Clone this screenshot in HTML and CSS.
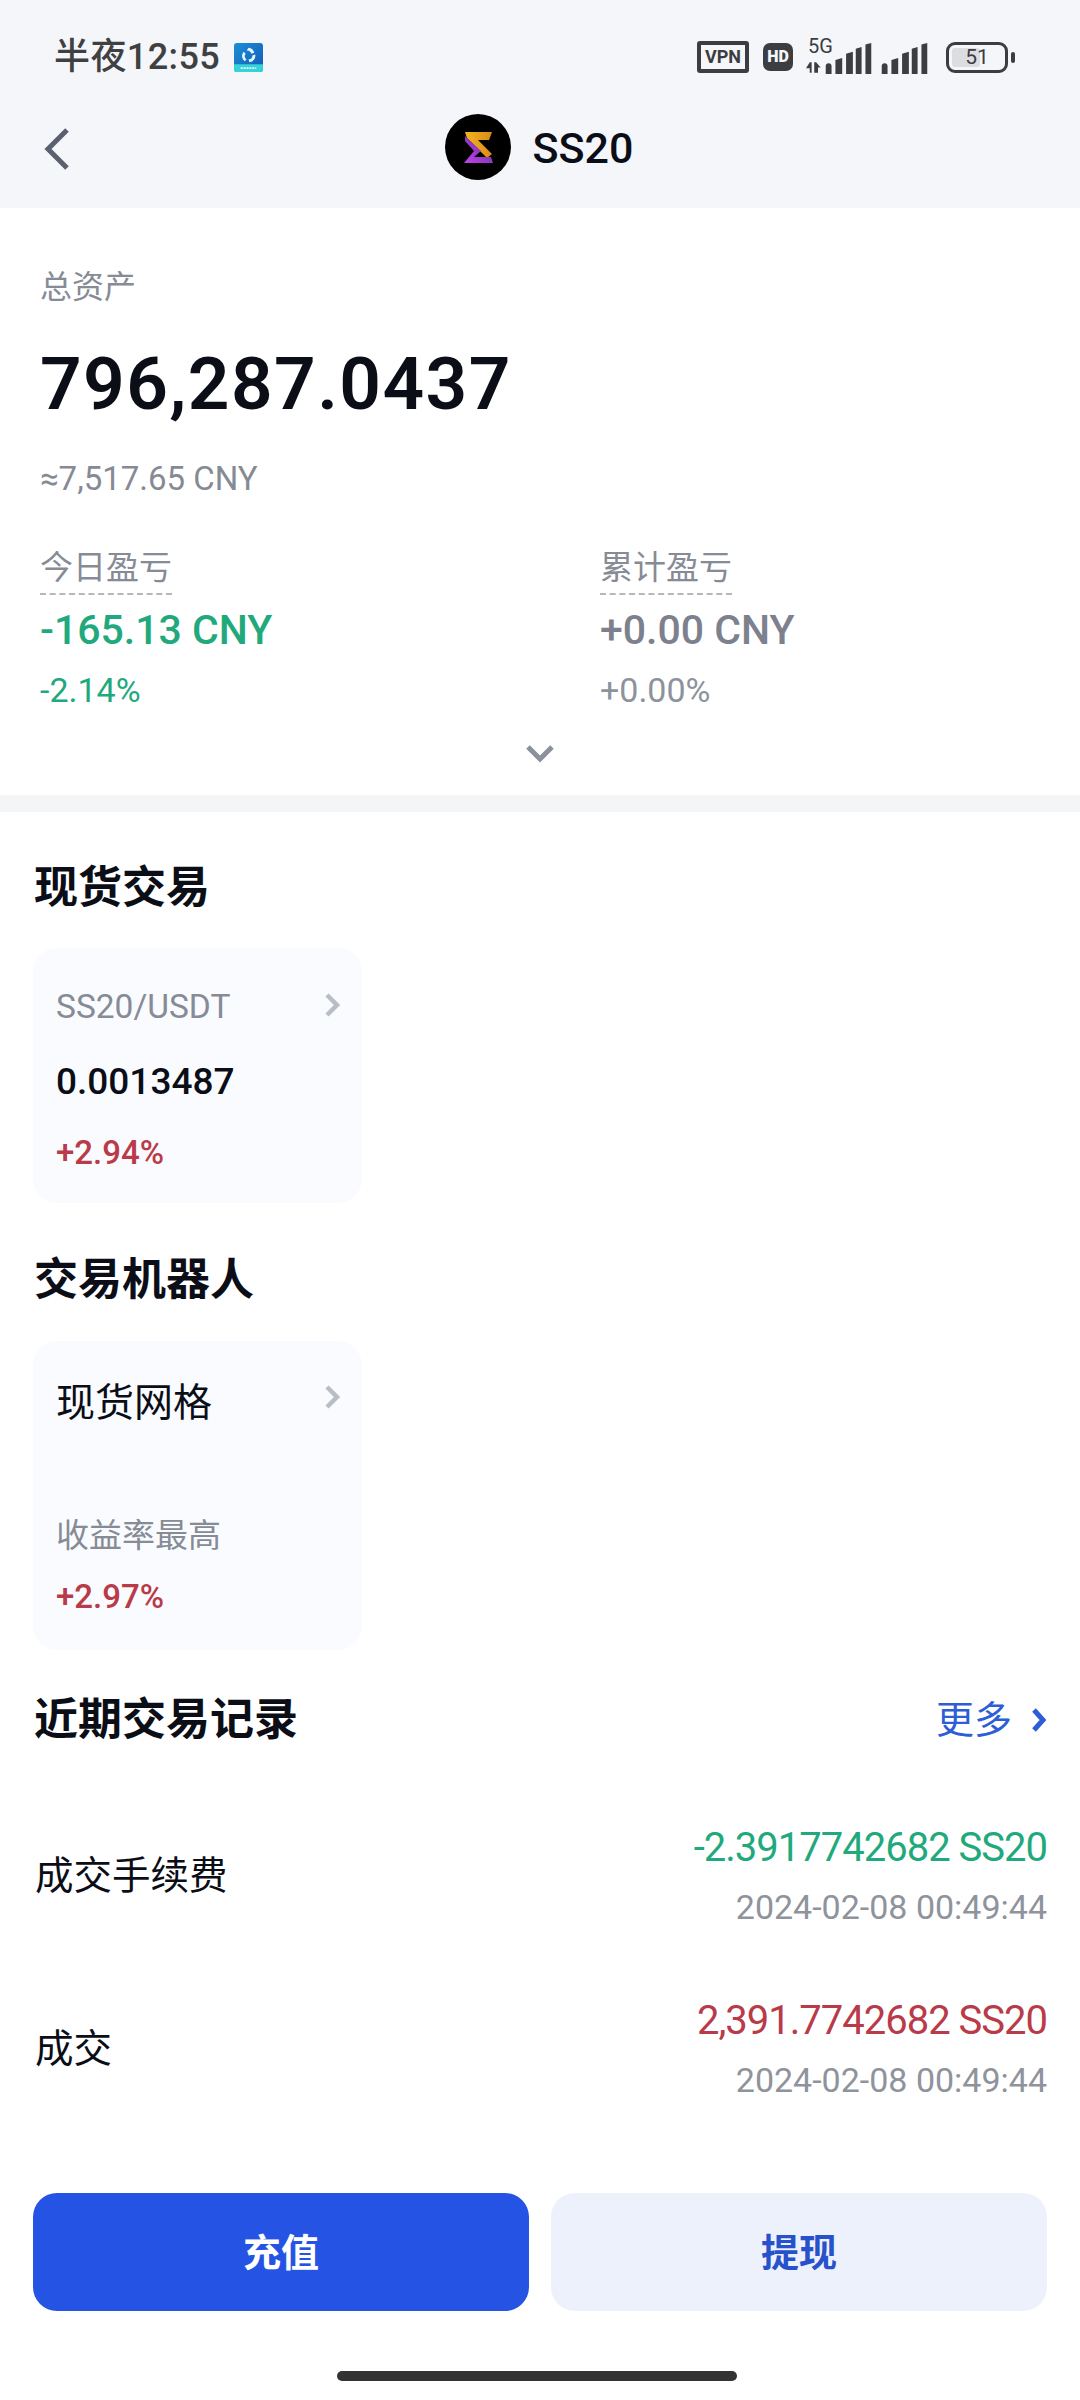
FILE: index.html
```html
<!DOCTYPE html>
<html lang="zh">
<head>
<meta charset="utf-8">
<title>SS20</title>
<link rel="stylesheet" href="styles.css">
</head>
<body>
<div class="page">
  <header class="top">
    <div class="status">
      <div class="status-left">
        <span class="clock">半夜12:55</span>
        <svg class="app-icon" viewBox="0 0 30 30">
          <defs><linearGradient id="ab" x1="0" y1="0" x2="1" y2="1"><stop offset="0" stop-color="#1b8fd6"/><stop offset="1" stop-color="#1559b5"/></linearGradient></defs>
          <rect width="30" height="30" rx="3" fill="url(#ab)"/>
          <path d="M0 22H30V27a3 3 0 0 1-3 3H3a3 3 0 0 1-3-3Z" fill="#35d3d8"/>
          <path d="M15 5a7 7 0 0 1 6 5l-3 1a4 4 0 0 0-5-3ZM10 9l2 2a4 4 0 0 0 1 6l-2 2a7 7 0 0 1-1-10ZM22 12a7 7 0 0 1-6 8l-1-3a4 4 0 0 0 4-4Z" fill="#e6f6ff"/>
          <path d="M7 26h16" stroke="#e6ffff" stroke-width="1.6" stroke-dasharray="2 1"/>
        </svg>
      </div>
      <div class="status-right">
        <span class="vpn">VPN</span>
        <span class="hd">HD</span>
        <div class="net">
          <span class="five-g">5G</span>
          <svg class="net-arrows" viewBox="0 0 24 14"><path d="M5 0h2.500v14H5V8H0Z M11 14V0h2.500l6 7h-3.500v7Z" fill="#3c3d40"/></svg>
          <svg class="bars-a" viewBox="0 0 47 32"><path d="M0 24a3 3 0 0 1 6 0v8H0ZM10 17.500l7-2V32h-7ZM21 11l7-2V32h-7ZM31 6l6-2V32h-6ZM41 1.500l6-1.500V32h-6Z" fill="#3c3d40"/></svg>
        </div>
        <svg class="bars-b" viewBox="0 0 47 32"><path d="M0 24a3 3 0 0 1 6 0v8H0ZM10 17.500l7-2V32h-7ZM21 11l7-2V32h-7ZM31 6l6-2V32h-6ZM41 1.500l6-1.500V32h-6Z" fill="#3c3d40"/></svg>
        <div class="battery"><div class="battery-body"><span class="battery-fill"></span><span class="battery-num">51</span></div><span class="battery-nub"></span></div>
      </div>
    </div>
    <nav class="nav">
      <svg class="back" viewBox="0 0 28 44"><path d="M24 3 5 22l19 19" fill="none" stroke="#5a6070" stroke-width="5"/></svg>
      <div class="nav-title">
        <svg class="logo" viewBox="0 0 66 66">
          <defs>
            <linearGradient id="lg" x1="0" y1="0" x2="1" y2="0"><stop offset="0" stop-color="#f3b61f"/><stop offset="1" stop-color="#d98b17"/></linearGradient>
            <linearGradient id="lp" x1="0" y1="1" x2="1" y2="0"><stop offset="0" stop-color="#c244ef"/><stop offset="1" stop-color="#5f2a90"/></linearGradient>
          </defs>
          <circle cx="33" cy="33" r="33" fill="#000"/>
          <path d="M20 18H47L44 26H33L47 40L42 44L22 24Z" fill="url(#lg)"/>
          <path d="M20 22L36 37L29 43H46L48 49H19L29 37L20 27Z" fill="url(#lp)"/>
        </svg>
        <span class="nav-name">SS20</span>
      </div>
    </nav>
  </header>

  <section class="summary">
    <div class="muted-label">总资产</div>
    <div class="total">796,287.0437</div>
    <div class="approx">≈7,517.65 CNY</div>
    <div class="pnl">
      <div class="pnl-col">
        <div class="pnl-label">今日盈亏</div>
        <div class="pnl-value green">-165.13 CNY</div>
        <div class="pnl-pct green">-2.14%</div>
      </div>
      <div class="pnl-col">
        <div class="pnl-label">累计盈亏</div>
        <div class="pnl-value gray">+0.00 CNY</div>
        <div class="pnl-pct lightgray">+0.00%</div>
      </div>
    </div>
    <svg class="expand" viewBox="0 0 30 20"><path d="M3 3l12 12L27 3" fill="none" stroke="#8b919c" stroke-width="5"/></svg>
  </section>

  <div class="divider"></div>

  <section class="block spot">
    <h2 class="heading">现货交易</h2>
    <div class="card card-spot">
      <div class="card-head">
        <span class="pair">SS20/USDT</span>
        <svg class="card-arrow" viewBox="0 0 18 26"><path d="M3 3l10 10L3 23" fill="none" stroke="#b9bdc5" stroke-width="4.500"/></svg>
      </div>
      <div class="price">0.0013487</div>
      <div class="change red">+2.94%</div>
    </div>
  </section>

  <section class="block bots">
    <h2 class="heading">交易机器人</h2>
    <div class="card card-bot">
      <div class="card-head">
        <span class="bot-name">现货网格</span>
        <svg class="card-arrow" viewBox="0 0 18 26"><path d="M3 3l10 10L3 23" fill="none" stroke="#b9bdc5" stroke-width="4.500"/></svg>
      </div>
      <div class="bot-sub">收益率最高</div>
      <div class="change red">+2.97%</div>
    </div>
  </section>

  <section class="block records">
    <div class="records-head">
      <h2 class="heading">近期交易记录</h2>
      <div class="more"><span>更多</span><svg class="more-arrow" viewBox="0 0 18 26"><path d="M4 3l9 10-9 10" fill="none" stroke="#2d5ed6" stroke-width="5"/></svg></div>
    </div>
    <div class="row">
      <span class="row-name">成交手续费</span>
      <div class="row-right">
        <div class="row-amount green">-2.3917742682 SS20</div>
        <div class="row-date">2024-02-08 00:49:44</div>
      </div>
    </div>
    <div class="row">
      <span class="row-name">成交</span>
      <div class="row-right">
        <div class="row-amount red">2,391.7742682 SS20</div>
        <div class="row-date">2024-02-08 00:49:44</div>
      </div>
    </div>
  </section>

  <div class="actions">
    <button class="btn btn-primary">充值</button>
    <button class="btn btn-light">提现</button>
  </div>
  <div class="home-bar"></div>
</div>
</body>
</html>
```

FILE: styles.css
```css
* { box-sizing: border-box; }
html, body { margin: 0; padding: 0; background: #fff; }
body { font-family: Roboto, "Noto Sans CJK SC", sans-serif; color: #0b0e17; }
.page { width: 1080px; height: 2400px; overflow: hidden; }

.top { height: 208px; background: #f4f6fa; }
.status { height: 114px; padding: 36px 65px 0 54px; display: flex; justify-content: space-between; align-items: flex-start; }
.status-left { display: flex; align-items: center; gap: 14px; height: 42px; }
.clock { font-size: 36px; line-height: 42px; font-weight: 500; letter-spacing: .4px; color: #3f4042; white-space: nowrap; }
.app-icon { width: 29px; height: 29px; }
.status-right { display: flex; align-items: center; gap: 14px; height: 42px; color: #3c3d40; }
.vpn { width: 52px; height: 32px; border: 4px solid #3c3d40; border-radius: 3px; font-size: 18px; line-height: 24px; font-weight: 700; text-align: center; }
.hd { width: 30px; height: 28px; background: #3c3d40; border-radius: 7px; color: #f4f6fa; font-size: 16px; line-height: 28px; font-weight: 900; text-align: center; }
.net { position: relative; width: 66px; height: 36px; margin-left: -1px; }
.five-g { position: absolute; left: 2px; top: -4px; font-size: 20px; line-height: 22px; }
.net-arrows { position: absolute; left: 0; bottom: 2px; width: 18px; height: 11px; }
.bars-a { position: absolute; right: 0; bottom: 1px; width: 47px; height: 31px; }
.bars-b { width: 49px; height: 31px; margin-top: 2px; margin-left: -6px; }
.battery { display: flex; align-items: center; gap: 3px; margin-left: 3px; }
.battery-body { position: relative; width: 62px; height: 31px; border: 3px solid #3c3d40; border-radius: 9px; overflow: hidden; }
.battery-fill { position: absolute; left: 3px; top: 3px; bottom: 3px; width: 28px; background: #dcdde0; border-radius: 3px; }
.battery-num { position: absolute; inset: 0; text-align: center; font-size: 21px; line-height: 25px; color: #3c3d40; }
.battery-nub { width: 4px; height: 11px; background: #3c3d40; border-radius: 2px; }

.nav { position: relative; height: 94px; display: flex; align-items: center; justify-content: center; }
.back { position: absolute; left: 43px; top: 13px; width: 28px; height: 44px; }
.nav-title { display: flex; align-items: center; gap: 22px; margin-left: -2px; font-size: 43px; line-height: 66px; font-weight: 500; margin-top: -28px; }
.nav-name { margin-top: 2px; }
.logo { width: 66px; height: 66px; }

.summary { position: relative; height: 587px; padding: 57px 40px 0; }
.muted-label { font-size: 32px; line-height: 44px; color: #868b96; }
.total { margin-top: 31px; font-size: 73px; line-height: 88px; font-weight: 600; letter-spacing: 1.4px; }
.approx { margin-top: 31px; font-size: 33px; line-height: 40px; color: #858a94; }
.pnl { margin-top: 49px; display: flex; }
.pnl-col { flex: none; width: 560px; }
.pnl-label { display: inline-block; font-size: 33px; line-height: 40px; color: #868b96; border-bottom: 2px dashed #b4b7bd; padding-bottom: 5px; vertical-align: top; }
.pnl-value { margin-top: 11px; font-size: 41px; line-height: 48px; font-weight: 500; }
.pnl-pct { margin-top: 16px; font-size: 34px; line-height: 40px; }
.green { color: #1fa97c; }
.red { color: #b93a48; }
.gray { color: #7c818d; }
.lightgray { color: #8d929c; }
.expand { position: absolute; left: 525px; top: 536px; width: 30px; height: 20px; }

.divider { height: 17px; background: #f4f5f7; }

.block { padding: 0 33px; }
.heading { margin: 0; padding-left: 1px; font-size: 44px; line-height: 60px; font-weight: 700; }
.spot { padding-top: 46px; }
.card { width: 329px; background: #f9fbfe; border-radius: 24px; padding: 0 23px; }
.card-spot { height: 255px; margin-top: 30px; padding-top: 35px; }
.card-bot { height: 309px; margin-top: 31px; padding-top: 38px; }
.card-head { display: flex; justify-content: space-between; align-items: center; height: 48px; }
.card-arrow { width: 18px; height: 26px; margin-right: -3px; margin-top: -4px; }
.card-bot .card-arrow { margin-top: -12px; }
.pair { font-size: 33.500px; line-height: 48px; color: #868b96; }
.price { margin-top: 27px; font-size: 37px; line-height: 48px; font-weight: 500; }
.change { font-size: 33px; line-height: 44px; font-weight: 500; }
.card-spot .change { margin-top: 25px; }
.bot-name { font-size: 39px; line-height: 48px; color: #0b0e17; }
.bot-sub { margin-top: 87px; font-size: 33px; line-height: 44px; color: #868b96; }
.card-bot .change { margin-top: 17px; }
.bots { padding-top: 47px; }
.records { padding-top: 40px; padding-right: 33px; }
.records-head { display: flex; justify-content: space-between; align-items: center; }
.more { display: flex; align-items: center; gap: 18px; margin-right: -1px; font-size: 38px; line-height: 60px; color: #2d5ed6; }
.more-arrow { width: 18px; height: 26px; }

.row { display: flex; justify-content: space-between; align-items: center; height: 173px; padding-left: 2px; }
.records-head + .row { margin-top: 39px; }
.row-name { font-size: 38.500px; line-height: 48px; }
.row-right { text-align: right; }
.row-amount { font-size: 40px; line-height: 48px; letter-spacing: -1px; }
.row-date { margin-top: 15px; font-size: 34px; line-height: 40px; color: #8f939c; }

.actions { margin-top: 58px; padding: 0 33px; display: flex; gap: 22px; }
.btn { flex: 1; height: 118px; border: 0; border-radius: 24px; padding: 0 0 5px; font-family: inherit; font-size: 38px; font-weight: 700; }
.btn-primary { background: #2553e4; color: #fff; }
.btn-light { background: #edf1fb; color: #2852cc; }
.home-bar { width: 400px; height: 10px; margin: 60px 0 0 337px; background: #333; border-radius: 5px; }
```
